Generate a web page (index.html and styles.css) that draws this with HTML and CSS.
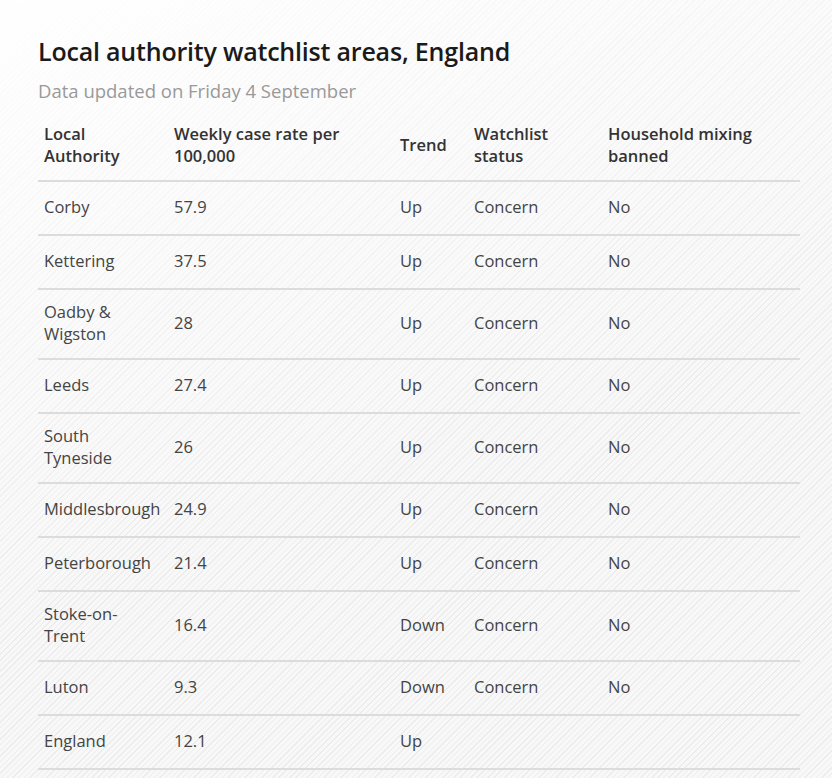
FILE: index.html
```html
<!DOCTYPE html>
<html lang="en">
<head>
<meta charset="utf-8">
<title>Local authority watchlist areas, England</title>
<link rel="stylesheet" href="styles.css">
</head>
<body>
<main class="page">
  <h1 class="title">Local authority watchlist areas, England</h1>
  <p class="subtitle">Data updated on Friday 4 September</p>
  <table class="data">
    <colgroup>
      <col class="c1"><col class="c2"><col class="c3"><col class="c4"><col class="c5">
    </colgroup>
    <thead>
      <tr><th>Local Authority</th><th>Weekly case rate per 100,000</th><th>Trend</th><th>Watchlist status</th><th>Household mixing banned</th></tr>
    </thead>
    <tbody>
      <tr><td>Corby</td><td>57.9</td><td>Up</td><td>Concern</td><td>No</td></tr>
      <tr><td>Kettering</td><td>37.5</td><td>Up</td><td>Concern</td><td>No</td></tr>
      <tr><td>Oadby &amp; Wigston</td><td>28</td><td>Up</td><td>Concern</td><td>No</td></tr>
      <tr><td>Leeds</td><td>27.4</td><td>Up</td><td>Concern</td><td>No</td></tr>
      <tr><td>South Tyneside</td><td>26</td><td>Up</td><td>Concern</td><td>No</td></tr>
      <tr><td>Middlesbrough</td><td>24.9</td><td>Up</td><td>Concern</td><td>No</td></tr>
      <tr><td>Peterborough</td><td>21.4</td><td>Up</td><td>Concern</td><td>No</td></tr>
      <tr><td>Stoke-on-Trent</td><td>16.4</td><td>Down</td><td>Concern</td><td>No</td></tr>
      <tr><td>Luton</td><td>9.3</td><td>Down</td><td>Concern</td><td>No</td></tr>
      <tr><td>England</td><td>12.1</td><td>Up</td><td></td><td></td></tr>
    </tbody>
  </table>
</main>
</body>
</html>
```
FILE: styles.css
```css
html, body {
  margin: 0;
  padding: 0;
}
body {
  min-height: 778px;
  font-family: "Open Sans", "Noto Sans", sans-serif;
  color: #333;
  background-color: #f8f8f8;
  background-image:
    linear-gradient(160deg, rgba(255,255,255,0.95) 0%, rgba(255,255,255,0.4) 30%, rgba(255,255,255,0) 60%),
    repeating-linear-gradient(-45deg, #f8f8f8 0px, #f8f8f8 3px, #ececec 3px, #ececec 4px);
}
.page {
  padding: 34px 32px 0 38px;
}
.title {
  margin: 0;
  font-size: 25px;
  line-height: 34px;
  font-weight: 600;
  color: #1a1a1a;
  letter-spacing: -0.2px;
}
.subtitle {
  margin: 10px 0 0;
  font-size: 18.5px;
  line-height: 26px;
  color: #999;
  font-weight: 400;
}
.data {
  margin-top: 7px;
  width: 762px;
  border-collapse: collapse;
  table-layout: fixed;
  font-size: 16.5px;
  line-height: 22px;
}
.c1 { width: 130px; }
.c2 { width: 226px; }
.c3 { width: 74px; }
.c4 { width: 134px; }
.c5 { width: 198px; }
.data th, .data td {
  text-align: left;
  vertical-align: middle;
  border-bottom: 2px solid #dcdcdc;
}
.data th {
  padding: 12px 6px 13px;
  font-weight: 600;
  color: #333;
}
.data td {
  padding: 11px 6px 13px;
  height: 28px;
  color: #444;
  font-weight: 400;
}
.data th:first-child, .data td:first-child {
  padding-right: 16px;
}
```
